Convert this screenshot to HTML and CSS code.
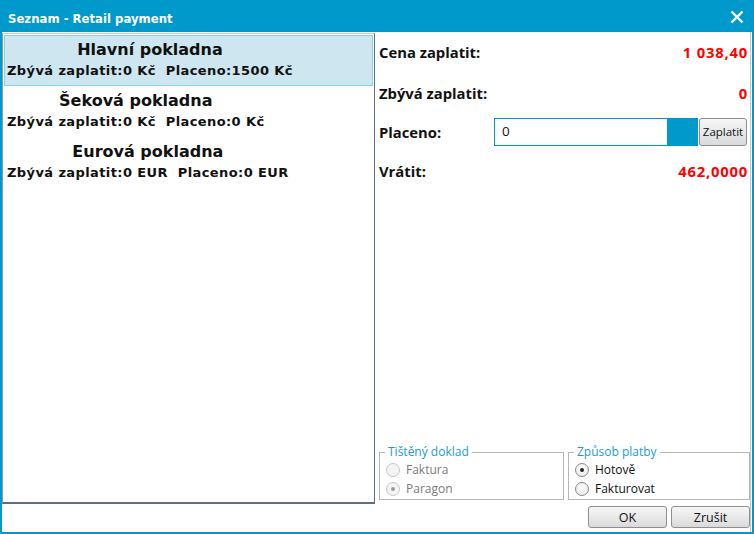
FILE: index.html
```html
<!DOCTYPE html>
<html lang="cs">
<head>
<meta charset="utf-8">
<title>Seznam - Retail payment</title>
<link rel="stylesheet" href="styles.css">
</head>
<body>
<div class="window">
  <div class="titlebar">
    <span class="title">Seznam - Retail payment</span>
    <svg class="close" width="14" height="14" viewBox="0 0 14 14"><path d="M1.5 1.5 L12.5 12.5 M12.5 1.5 L1.5 12.5" stroke="#fff" stroke-width="2.4" fill="none"/></svg>
  </div>
  <div class="content">
    <div class="list">
      <div class="item selected">
        <div class="item-inner">
          <div class="item-title">Hlavní pokladna</div>
          <div class="item-detail">Zbývá zaplatit:0 Kč  Placeno:1500 Kč</div>
        </div>
      </div>
      <div class="item">
        <div class="item-inner">
          <div class="item-title">Šeková pokladna</div>
          <div class="item-detail">Zbývá zaplatit:0 Kč  Placeno:0 Kč</div>
        </div>
      </div>
      <div class="item">
        <div class="item-inner">
          <div class="item-title">Eurová pokladna</div>
          <div class="item-detail">Zbývá zaplatit:0 EUR  Placeno:0 EUR</div>
        </div>
      </div>
    </div>
    <div class="panel">
      <div class="rows">
        <div class="row r1"><span class="label">Cena zaplatit:</span><span class="value">1 038,40</span></div>
        <div class="row r2"><span class="label">Zbývá zaplatit:</span><span class="value">0</span></div>
        <div class="row r3"><span class="label label-fixed">Placeno:</span>
          <div class="input">0</div><div class="input-block"></div><button class="btn btn-pay">Zaplatit</button>
        </div>
        <div class="row r4"><span class="label">Vrátit:</span><span class="value">462,0000</span></div>
      </div>
      <div class="groups">
        <fieldset class="group g1">
          <legend>Tištěný doklad</legend>
          <div class="radio disabled"><span class="dot"></span>Faktura</div>
          <div class="radio disabled checked"><span class="dot"></span>Paragon</div>
        </fieldset>
        <fieldset class="group g2">
          <legend>Způsob platby</legend>
          <div class="radio checked"><span class="dot"></span>Hotově</div>
          <div class="radio"><span class="dot"></span>Fakturovat</div>
        </fieldset>
      </div>
      <div class="buttons">
        <button class="btn btn-dlg">OK</button>
        <button class="btn btn-dlg">Zrušit</button>
      </div>
    </div>
  </div>
</div>
</body>
</html>
```
FILE: styles.css
```css
* { box-sizing: border-box; }
html, body { margin: 0; padding: 0; background: #fff; }
body { width: 754px; height: 534px; overflow: hidden; }

.window {
  width: 754px;
  height: 534px;
  display: flex;
  flex-direction: column;
  border-left: 2px solid #0099cc;
  border-right: 2px solid #0099cc;
  border-bottom: 2px solid #0099cc;
  background: #fff;
}

.titlebar {
  height: 32px;
  margin: 0 -2px;
  background: #0099cc;
  display: flex;
  align-items: center;
  justify-content: space-between;
  padding: 4px 10px 0 8px;
  flex: none;
}
.title {
  color: #fff;
  font-family: "DejaVu Sans Condensed", "DejaVu Sans", sans-serif;
  font-weight: bold;
  font-size: 13px;
}
.close { display: block; margin-top: -2px; }

.content {
  flex: 1;
  display: grid;
  grid-template-columns: 373px 1fr;
  grid-template-rows: 1fr 28px;
  border-right: 1px solid #c4c8cc;
  margin-right: 1px;
}

.list {
  grid-row: 1;
  grid-column: 1;
  margin-top: 1px;
  border-top: 1px solid #c5cdd2;
  border-left: 1px solid #8d9ba5;
  border-right: 1px solid #5d6f7b;
  border-bottom: 2px solid #5d6f7b;
  padding: 1px;
  font-family: "DejaVu Sans", sans-serif;
  font-weight: bold;
  color: #111;
}
.item {
  height: 51px;
  padding: 3px 2px 0 2px;
  border: 1px solid transparent;
}
.item.selected {
  background: #cde6ef;
  border-color: #8ad3e6;
}
.item-inner {
  display: inline-flex;
  flex-direction: column;
  align-items: center;
}
.item-title {
  font-size: 16px;
  line-height: 21px;
}
.item-detail {
  font-size: 13px;
  line-height: 22px;
  letter-spacing: 0.4px;
  white-space: pre;
}

.panel {
  grid-row: 1 / 3;
  grid-column: 2;
  display: flex;
  flex-direction: column;
  padding: 0 0 4px 4px;
  font-family: "Open Sans", sans-serif;
}
.rows { flex: 1; padding-right: 2px; }
.row {
  display: flex;
  align-items: center;
  justify-content: space-between;
}
.r1 { height: 40px; }
.r2 { height: 41px; }
.r3 { height: 37px; justify-content: flex-start; }
.r4 { height: 41px; }
.label {
  font-weight: bold;
  font-size: 14.8px;
  color: #111;
}
.label-fixed { width: 115px; flex: none; }
.value {
  font-weight: bold;
  font-size: 14.8px;
  letter-spacing: 0.8px;
  color: #ff0000;
}
.input {
  width: 174px;
  height: 28px;
  border: 1px solid #0099cc;
  font-family: "Open Sans", sans-serif;
  font-size: 13.5px;
  padding: 3px 7px;
  color: #111;
}
.input-block {
  width: 30px;
  height: 28px;
  background: #0099cc;
}
.btn {
  font-family: "Open Sans", sans-serif;
  font-size: 12px;
  color: #111;
  border: 1px solid #8e8f8f;
  border-radius: 3px;
  background: linear-gradient(#f6f6f6, #e9e9e9 50%, #d9dadc);
  padding: 0;
}
.btn-pay {
  width: 48px;
  height: 28px;
  margin-left: 1px;
  font-size: 11.5px;
}

.groups {
  display: flex;
  gap: 4px;
}
.group {
  margin: 0;
  height: 55px;
  border: 1px solid #b7b7b7;
  padding: 1px 0 0 6px;
  font-family: "Open Sans", sans-serif;
  font-size: 12px;
}
.g1 { width: 185px; }
.g2 { width: 182px; }
.group legend {
  color: #1c9ad6;
  padding: 0 3px;
  margin-left: -1px;
  font-size: 12px;
  line-height: 14px;
}
.radio {
  display: flex;
  align-items: center;
  height: 19px;
  color: #111;
}
.radio.disabled { color: #7a7a7a; }
.dot {
  width: 14px;
  height: 14px;
  border-radius: 50%;
  border: 1px solid #8a8a8a;
  background: radial-gradient(circle at 50% 40%, #ffffff, #e4e4e4);
  margin-right: 6px;
  position: relative;
  flex: none;
}
.radio.disabled .dot { border-color: #c6c6c6; background: #f4f4f4; }
.radio.checked .dot::after {
  content: "";
  position: absolute;
  left: 4px; top: 4px;
  width: 4px; height: 4px;
  border-radius: 50%;
  background: #222;
}
.radio.disabled.checked .dot::after { background: #9a9a9a; }

.buttons {
  display: flex;
  justify-content: flex-end;
  gap: 4px;
  padding-top: 6px;
  height: 28px;
}
.btn-dlg {
  width: 79px;
  height: 22px;
  font-size: 12.5px;
}
```
